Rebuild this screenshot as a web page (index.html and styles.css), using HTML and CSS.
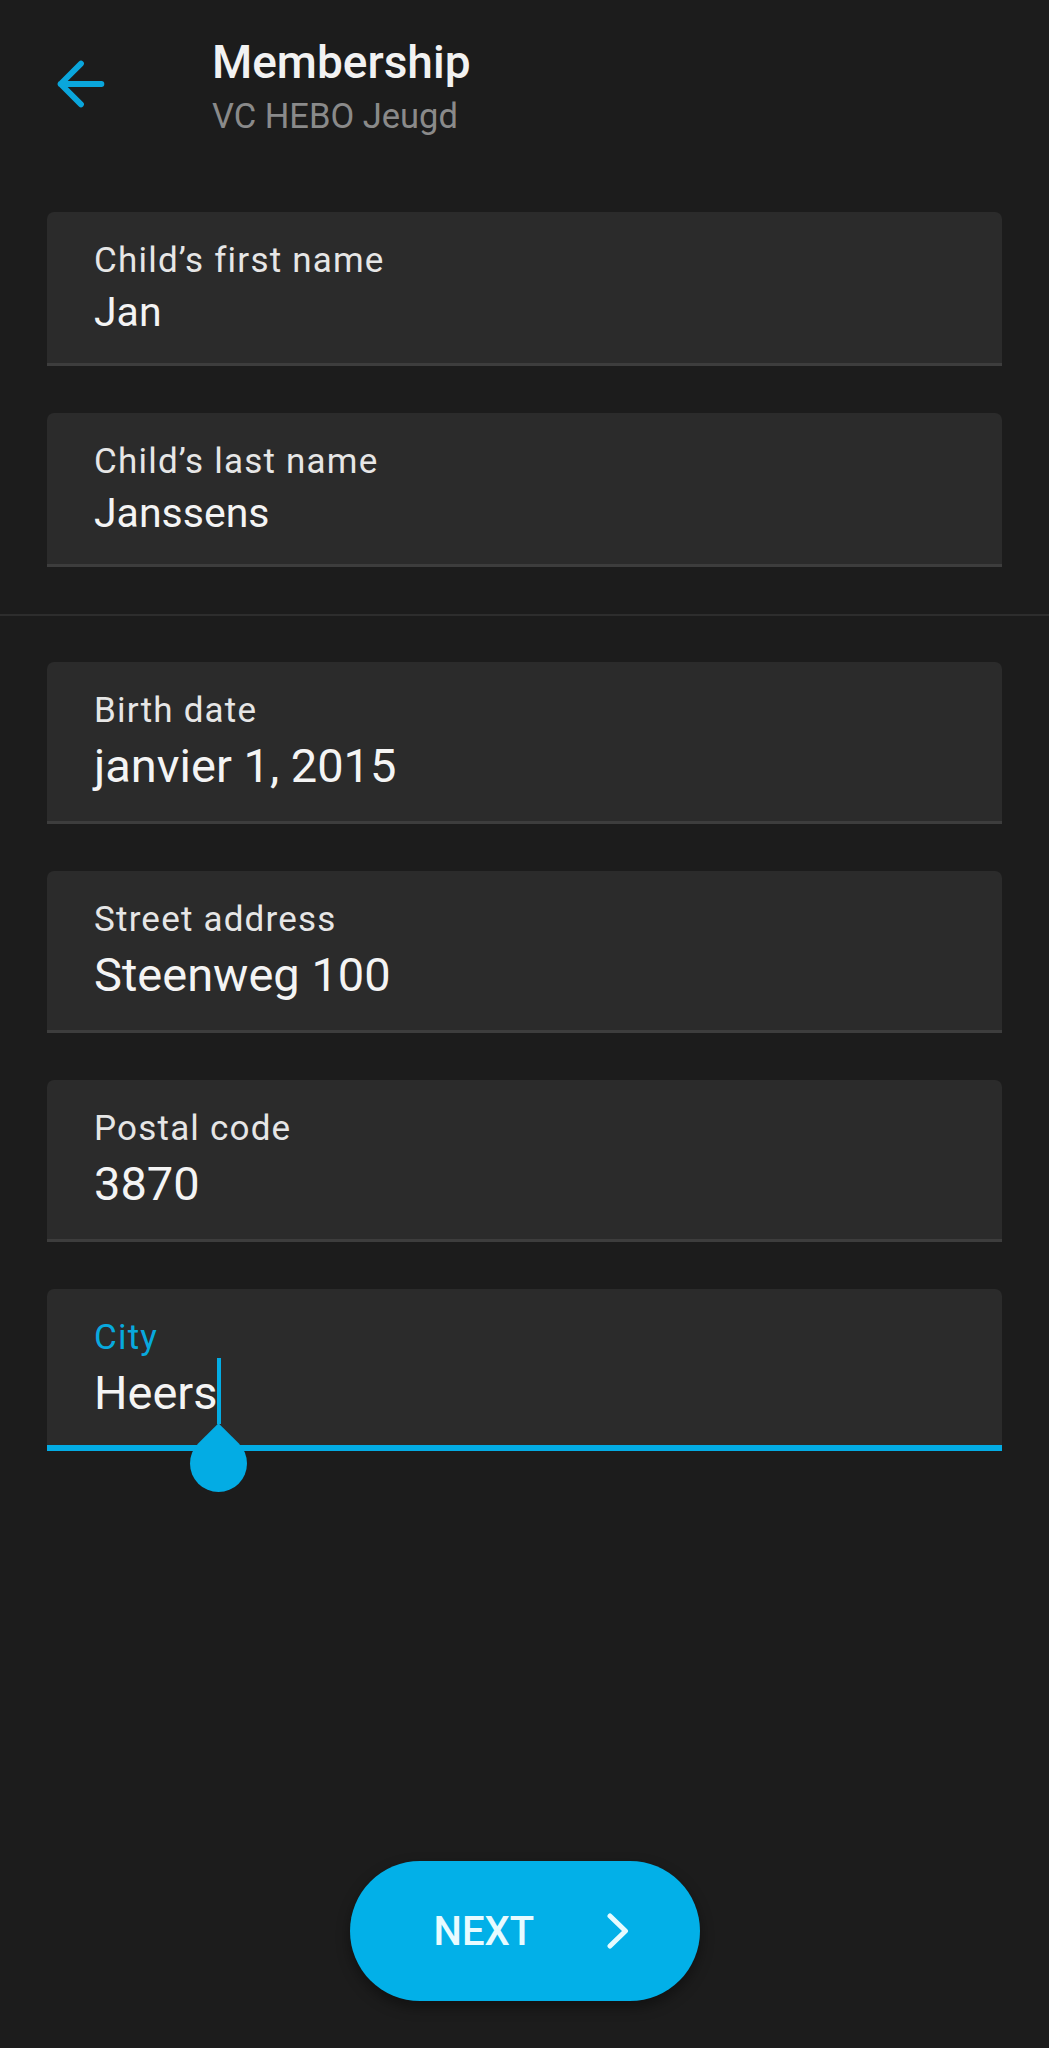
FILE: index.html
```html
<!DOCTYPE html>
<html lang="en">

<head>
    <meta charset="UTF-8" />
    <title>Membership - VC HEBO Jeugd</title>
    <link rel="stylesheet" href="styles.css">
</head>

<body>
    <div class="page">
        <header class="topbar">
            <svg class="back" viewBox="0 0 24 24" width="70" height="70">
                <path d="M19 12H5M12 19l-7-7 7-7" fill="none" stroke="#0aa6dc" stroke-width="2"
                    stroke-linecap="round" stroke-linejoin="round" />
            </svg>
            <div class="titles">
                <h1>Membership</h1>
                <p>VC HEBO Jeugd</p>
            </div>
        </header>

        <!-- naam van het kind -->
        <section class="group">
            <div class="field small">
                <div class="label">Child’s first name</div>
                <div class="value">Jan</div>
            </div>
            <div class="field small">
                <div class="label">Child’s last name</div>
                <div class="value">Janssens</div>
            </div>
        </section>

        <!-- gegevens -->
        <section class="group divided">
            <div class="field">
                <div class="label">Birth date</div>
                <div class="value">janvier 1, 2015</div>
            </div>
            <div class="field">
                <div class="label">Street address</div>
                <div class="value">Steenweg 100</div>
            </div>
            <div class="field">
                <div class="label">Postal code</div>
                <div class="value">3870</div>
            </div>
            <div class="field focused">
                <div class="label">City</div>
                <div class="value"><span class="typed">Heers<span class="caret"><span
                                class="handle"></span></span></span></div>
            </div>
        </section>

        <footer class="actions">
            <button class="next">
                <span>NEXT</span>
                <svg viewBox="0 0 22 36" width="22" height="36">
                    <polyline points="3,3 18.5,18 3,33" fill="none" stroke="#e6fbff" stroke-width="5"
                        stroke-linecap="round" stroke-linejoin="round" />
                </svg>
            </button>
        </footer>
    </div>
</body>

</html>
```

FILE: styles.css
```css
body {
    font-family: Roboto, 'Noto Sans', sans-serif;
    background-color: #1c1c1c;
    margin: 0;
    padding: 0;
}

.page {
    min-height: 2048px;
    display: flex;
    flex-direction: column;
}

.topbar {
    display: flex;
    align-items: flex-start;
    padding: 35px 0 28px 46px;
}

.back {
    margin-top: 14px;
    margin-right: 96px;
    flex-shrink: 0;
}

.titles h1 {
    margin: 0;
    font-size: 46px;
    line-height: 54px;
    font-weight: 500;
    color: #f2f2f2;
}

.titles p {
    margin: 7px 0 0;
    font-size: 34.5px;
    line-height: 41px;
    color: #8a8a8a;
}

.group {
    display: flex;
    flex-direction: column;
    gap: 47px;
    padding: 47px;
}

.group.divided {
    border-top: 2px solid #2d2d2d;
    padding-top: 46px;
}

.field {
    background-color: #2b2b2b;
    border-radius: 7px 7px 0 0;
    border-bottom: 3px solid #3d3d3d;
    padding: 28px 47px 28px;
}

.label {
    font-size: 35px;
    line-height: 41px;
    letter-spacing: 1.2px;
    color: #e6e6e6;
}

.value {
    margin-top: 8px;
    font-size: 47px;
    line-height: 54px;
    color: #f4f4f4;
}

.field.small .value {
    font-size: 41px;
    line-height: 46px;
}

.field.focused {
    border-bottom: 6px solid #03ace4;
    padding-bottom: 25px;
}

.field.focused .label {
    color: #08a9de;
}

.typed {
    position: relative;
    display: inline-block;
}

.caret {
    position: absolute;
    left: calc(100% - 1px);
    top: -8px;
    width: 4px;
    height: 66px;
    background-color: #03ace4;
}

.handle {
    position: absolute;
    left: -26.5px;
    top: 77px;
    width: 57px;
    height: 57px;
    background-color: #03ace4;
    border-radius: 0 50% 50% 50%;
    transform: rotate(45deg);
}

.actions {
    margin-top: auto;
    padding-bottom: 47px;
    display: flex;
    justify-content: center;
}

.next {
    width: 350px;
    height: 140px;
    display: flex;
    align-items: center;
    gap: 73px;
    padding: 0 0 0 84px;
    background-color: #02b0e8;
    color: #e8fbff;
    border: none;
    border-radius: 70px;
    font-family: Roboto, 'Noto Sans', sans-serif;
    font-size: 40px;
    font-weight: 500;
    box-shadow: 0 6px 14px rgba(0, 0, 0, 0.4);
    cursor: pointer;
}
```
